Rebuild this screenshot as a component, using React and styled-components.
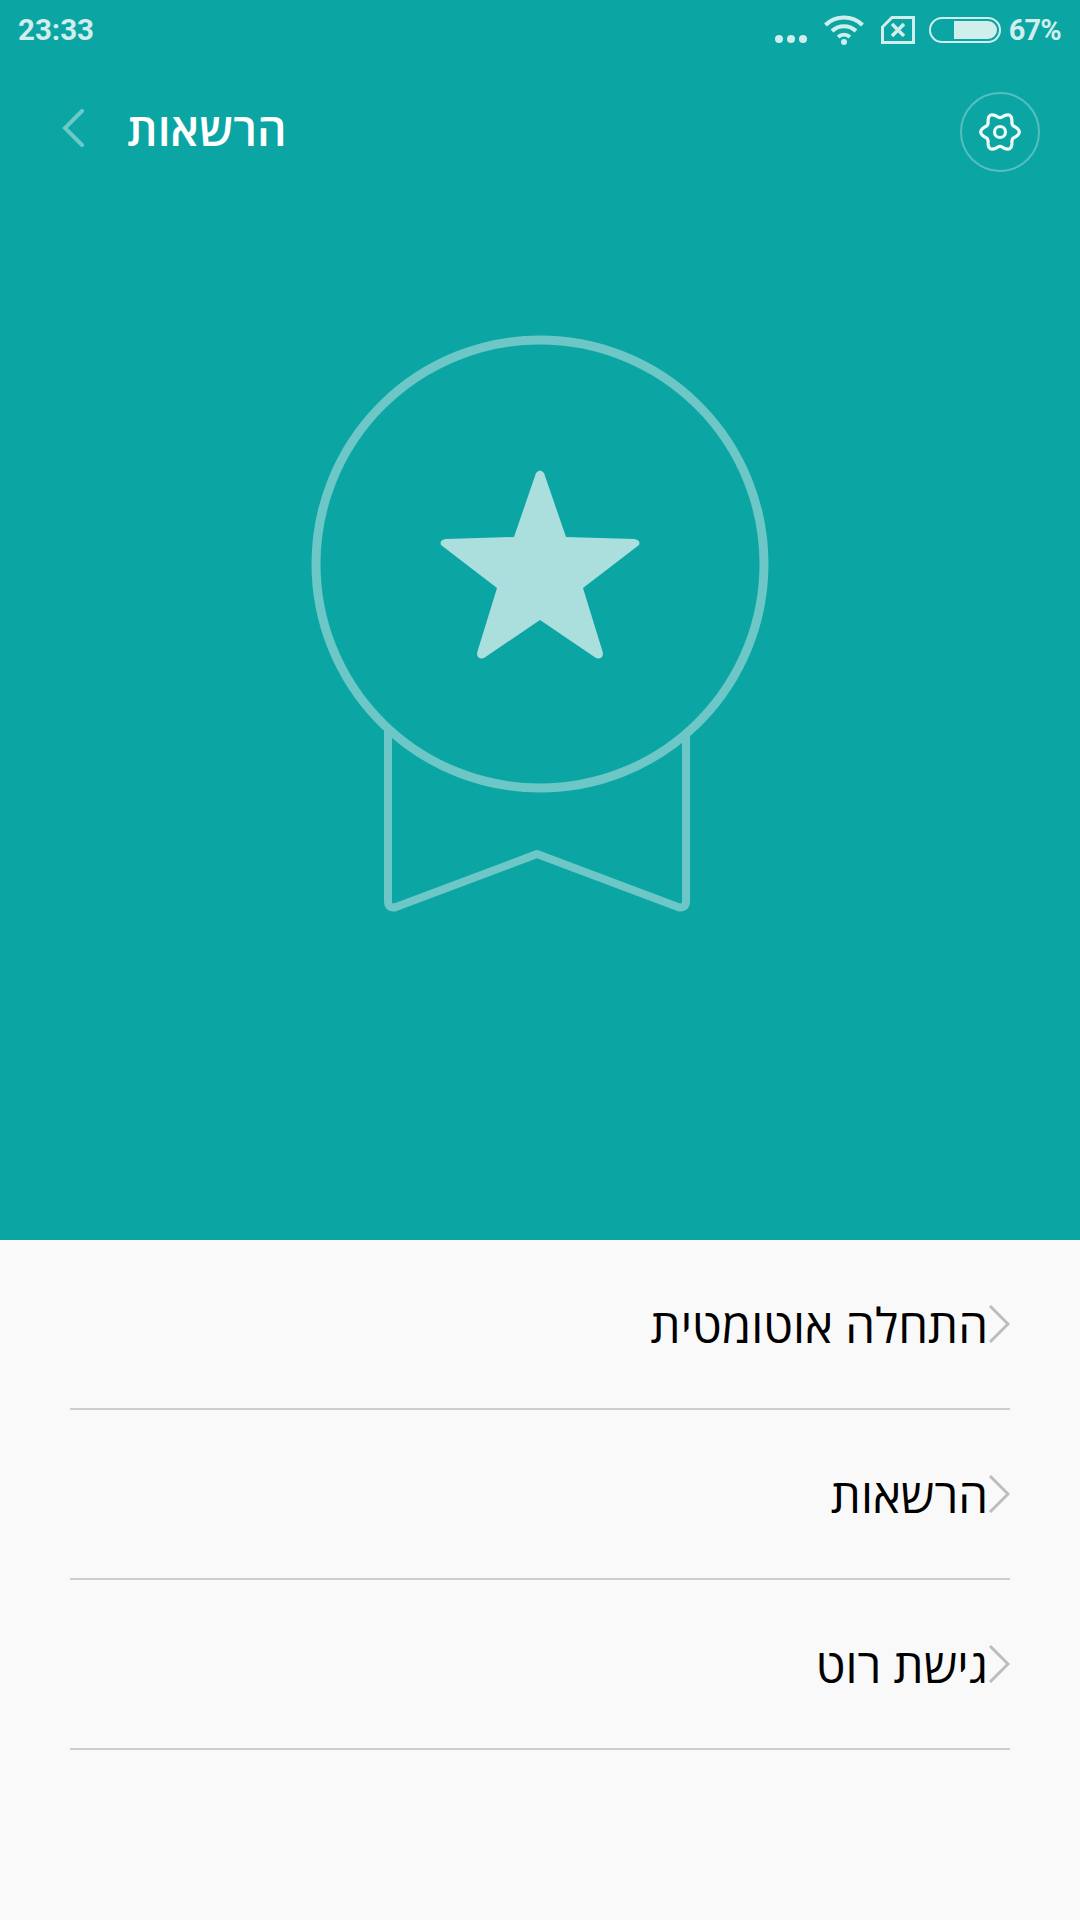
import React from "react";
import styled, { createGlobalStyle } from "styled-components";

const TEAL = "#0ba5a4";
const STATUS = "#cfeeec";
const HEBREW = `"Open Sans", "Noto Sans", "Liberation Sans", sans-serif`;

const GlobalStyle = createGlobalStyle`
  html, body {
    margin: 0;
    padding: 0;
    background: #f9f9f9;
  }
  * {
    box-sizing: border-box;
  }
`;

const Page = styled.div`
  width: 1080px;
  height: 1920px;
  display: flex;
  flex-direction: column;
  font-family: Roboto, "Noto Sans", "Liberation Sans", sans-serif;
  background: #f9f9f9;
`;

const Hero = styled.header`
  height: 1240px;
  display: flex;
  flex-direction: column;
  background: ${TEAL};
`;

const StatusBar = styled.div`
  height: 60px;
  padding: 0 19px 0 18px;
  display: flex;
  align-items: center;
  justify-content: space-between;
  color: ${STATUS};
  font-size: 29.5px;
  font-weight: 700;
`;

const StatusIcons = styled.div`
  display: flex;
  align-items: center;
`;

const Percent = styled.span`
  margin-left: 8px;
  font-size: 29px;
  letter-spacing: -0.8px;
`;

const Toolbar = styled.div`
  height: 144px;
  padding: 0 40px 0 62px;
  display: flex;
  align-items: center;
  justify-content: space-between;
`;

const TitleGroup = styled.div`
  display: flex;
  align-items: center;
  gap: 43px;
  margin-top: -8px;
`;

const Title = styled.h1`
  margin: 0;
  color: #fff;
  font-family: ${HEBREW};
  font-size: 46px;
  font-weight: 600;
  line-height: 52px;
`;

const SettingsButton = styled.button`
  width: 80px;
  height: 80px;
  padding: 0;
  display: flex;
  align-items: center;
  justify-content: center;
  background: none;
  border: 2px solid rgba(255, 255, 255, 0.3);
  border-radius: 50%;
`;

const MedalArea = styled.div`
  flex: 1;
  display: flex;
  justify-content: center;
  padding-top: 131px;
`;

const List = styled.ul`
  margin: 0;
  padding: 0 70px;
  list-style: none;
`;

const Row = styled.li`
  height: 170px;
  display: flex;
  align-items: center;
  direction: rtl;
  border-bottom: 2px solid #cdcdcd;
  color: #000;
  font-family: ${HEBREW};
  font-size: 47.5px;
`;

const Gear = () => {
  // six soft lobes around the hub
  const points = [];
  for (let i = 0; i < 72; i++) {
    const a = (i / 72) * Math.PI * 2;
    const r = 16.8 + 2.5 * Math.cos(6 * a);
    points.push(`${(22 + r * Math.cos(a)).toFixed(2)} ${(22 + r * Math.sin(a)).toFixed(2)}`);
  }
  return (
    <svg width="44" height="44" viewBox="0 0 44 44" fill="none" stroke="#eefafa" strokeWidth="3.2">
      <path d={`M${points.join("L")}Z`} strokeLinejoin="round" />
      <circle cx="22" cy="22" r="5.500" />
    </svg>
  );
};

const BackArrow = () => (
  <svg width="22" height="38" viewBox="0 0 22 38" fill="none" stroke="#6dc9c8" strokeWidth="4" strokeLinecap="round">
    <path d="M20 2 3 19l17 17" />
  </svg>
);

const RowArrow = () => (
  <svg width="22" height="38" viewBox="0 0 22 38" fill="none" stroke="#bdbdbd" strokeWidth="3">
    <path d="M2 1l18 18L2 37" />
  </svg>
);

const Dots = () => (
  <svg width="32" height="10" viewBox="0 0 32 10" fill={STATUS} style={{ marginTop: 18 }}>
    <circle cx="4" cy="5" r="4" />
    <circle cx="16" cy="5" r="4" />
    <circle cx="28" cy="5" r="4" />
  </svg>
);

const Wifi = () => (
  <svg width="40" height="30" viewBox="0 0 40 30" fill="none" stroke={STATUS} strokeWidth="4" style={{ marginLeft: 17 }}>
    <path d="M1.500 10C11.500 0 28.500 0 38.500 10" />
    <path d="M8 16c7-6.500 17-6.500 24 0" />
    <path d="M14 22c3.500-3 8.500-3 12 0" />
    <circle cx="20" cy="27" r="3" fill={STATUS} stroke="none" />
  </svg>
);

const NoSim = () => (
  <svg width="34" height="28" viewBox="0 0 34 28" fill="none" stroke={STATUS} strokeWidth="3" style={{ marginLeft: 17 }}>
    <path d="M11 1.500h21.500v25H1.500V11z" />
    <path d="M11 8l12 12M23 8 11 20" strokeWidth="3.500" />
  </svg>
);

const Battery = () => (
  <svg width="72" height="26" viewBox="0 0 72 26" fill="none" style={{ marginLeft: 14 }}>
    <rect x="1" y="1" width="70" height="24" rx="12" stroke={STATUS} strokeWidth="2" />
    <path d="M25 4h34a9 9 0 0 1 0 18H25z" fill={STATUS} />
  </svg>
);

const Medal = () => (
  <svg width="460" height="580" viewBox="310 335 460 580" fill="none">
    <g stroke="#6dc7c6">
      <circle cx="540" cy="564" r="224" strokeWidth="9" />
      <path d="M388 728V901q0 8 8 6L537 854 678 907q8 2 8-6V733" strokeWidth="8" strokeLinejoin="round" />
    </g>
    <path
      d="M536 473q4-5 8 0L566 537 634 539q7 1 5 6L583 588 603 653q0 7-7 5L540 620 484 658q-7 2-7-5L497 588 441 545q-2-5 5-6L514 537z"
      fill="#aadfde"
    />
  </svg>
);

const items = ["התחלה אוטומטית", "הרשאות", "גישת רוט"];

const App = () => (
  <Page>
    <GlobalStyle />
    <Hero>
      <StatusBar>
        <span>23:33</span>
        <StatusIcons>
          <Dots />
          <Wifi />
          <NoSim />
          <Battery />
          <Percent>67%</Percent>
        </StatusIcons>
      </StatusBar>
      <Toolbar>
        <TitleGroup>
          <BackArrow />
          <Title>הרשאות</Title>
        </TitleGroup>
        <SettingsButton>
          <Gear />
        </SettingsButton>
      </Toolbar>
      <MedalArea>
        <Medal />
      </MedalArea>
    </Hero>
    <List>
      {items.map((item) => (
        <Row key={item}>
          <RowArrow />
          <span>{item}</span>
        </Row>
      ))}
    </List>
  </Page>
);

export default App;
